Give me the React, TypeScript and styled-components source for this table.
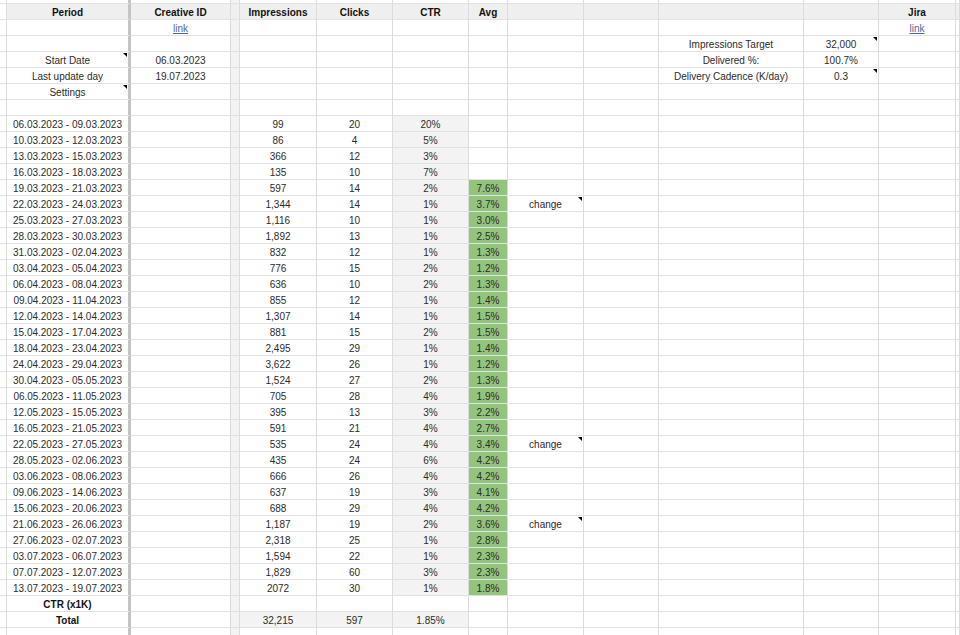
import * as React from 'react';
import styled, { createGlobalStyle, css } from 'styled-components';

const GlobalStyle = createGlobalStyle`
  html, body {
    margin: 0;
    padding: 0;
    background: #ffffff;
  }
`;

// column widths, each includes its right grid line
const COLS = [7, 124, 100, 9, 77, 76, 76, 39, 76, 75, 145, 75, 77];

type Fill = 'none' | 'header' | 'gray' | 'green';

const fills: Record<Fill, string> = {
  none: '#ffffff',
  header: '#efefef',
  gray: '#f3f3f3',
  green: '#93c47d',
};

const Sheet = styled.div`
  display: grid;
  grid-template-columns: ${COLS.map((w) => `${w}px`).join(' ')} 1fr;
  grid-template-rows: 4px;
  grid-auto-rows: 16px;
  width: 960px;
  height: 635px;
  overflow: hidden;
  font-family: 'Liberation Sans', Arial, sans-serif;
  font-size: 10px;
  color: #2b2b2b;
`;

const Cell = styled.div<{ $fill: Fill; $bold?: boolean; $frozen?: boolean }>`
  position: relative;
  box-sizing: border-box;
  padding-top: 1px;
  border-right: 1px solid #dcdcdc;
  border-bottom: 1px solid #e2e2e2;
  background: ${({ $fill }) => fills[$fill]};
  text-align: center;
  line-height: 15px;
  white-space: nowrap;
  overflow: hidden;
  ${({ $bold }) =>
    $bold &&
    css`
      font-weight: bold;
      color: #111111;
    `}
  ${({ $frozen }) =>
    $frozen &&
    css`
      border-right: 3px solid #c4c4c4;
    `}
`;

const Note = styled.span`
  position: absolute;
  top: 1px;
  right: 1px;
  width: 0;
  height: 0;
  border-top: 4px solid #000000;
  border-left: 4px solid transparent;
`;

const LinkText = styled.span`
  color: #5068a6;
  text-decoration: underline;
`;

type CellSpec = {
  text?: string;
  bold?: boolean;
  fill?: Fill;
  note?: boolean;
  link?: boolean;
};

type RowSpec = Record<number, CellSpec>;

const dataRows: [string, string, string, string, string, boolean?][] = [
  ['06.03.2023 - 09.03.2023', '99', '20', '20%', ''],
  ['10.03.2023 - 12.03.2023', '86', '4', '5%', ''],
  ['13.03.2023 - 15.03.2023', '366', '12', '3%', ''],
  ['16.03.2023 - 18.03.2023', '135', '10', '7%', ''],
  ['19.03.2023 - 21.03.2023', '597', '14', '2%', '7.6%'],
  ['22.03.2023 - 24.03.2023', '1,344', '14', '1%', '3.7%', true],
  ['25.03.2023 - 27.03.2023', '1,116', '10', '1%', '3.0%'],
  ['28.03.2023 - 30.03.2023', '1,892', '13', '1%', '2.5%'],
  ['31.03.2023 - 02.04.2023', '832', '12', '1%', '1.3%'],
  ['03.04.2023 - 05.04.2023', '776', '15', '2%', '1.2%'],
  ['06.04.2023 - 08.04.2023', '636', '10', '2%', '1.3%'],
  ['09.04.2023 - 11.04.2023', '855', '12', '1%', '1.4%'],
  ['12.04.2023 - 14.04.2023', '1,307', '14', '1%', '1.5%'],
  ['15.04.2023 - 17.04.2023', '881', '15', '2%', '1.5%'],
  ['18.04.2023 - 23.04.2023', '2,495', '29', '1%', '1.4%'],
  ['24.04.2023 - 29.04.2023', '3,622', '26', '1%', '1.2%'],
  ['30.04.2023 - 05.05.2023', '1,524', '27', '2%', '1.3%'],
  ['06.05.2023 - 11.05.2023', '705', '28', '4%', '1.9%'],
  ['12.05.2023 - 15.05.2023', '395', '13', '3%', '2.2%'],
  ['16.05.2023 - 21.05.2023', '591', '21', '4%', '2.7%'],
  ['22.05.2023 - 27.05.2023', '535', '24', '4%', '3.4%', true],
  ['28.05.2023 - 02.06.2023', '435', '24', '6%', '4.2%'],
  ['03.06.2023 - 08.06.2023', '666', '26', '4%', '4.2%'],
  ['09.06.2023 - 14.06.2023', '637', '19', '3%', '4.1%'],
  ['15.06.2023 - 20.06.2023', '688', '29', '4%', '4.2%'],
  ['21.06.2023 - 26.06.2023', '1,187', '19', '2%', '3.6%', true],
  ['27.06.2023 - 02.07.2023', '2,318', '25', '1%', '2.8%'],
  ['03.07.2023 - 06.07.2023', '1,594', '22', '1%', '2.3%'],
  ['07.07.2023 - 12.07.2023', '1,829', '60', '3%', '2.3%'],
  ['13.07.2023 - 19.07.2023', '2072', '30', '1%', '1.8%'],
];

// column indexes: 0 gutter, 1 A, 2 B, 3 C, 4 D, 5 E, 6 F, 7 G, 8 H, 9 I, 10 J, 11 K, 12 L, 13 M
const headerRow: RowSpec = {
  1: { text: 'Period', bold: true },
  2: { text: 'Creative ID', bold: true },
  4: { text: 'Impressions', bold: true },
  5: { text: 'Clicks', bold: true },
  6: { text: 'CTR', bold: true },
  7: { text: 'Avg', bold: true },
  12: { text: 'Jira', bold: true },
};

const rows: RowSpec[] = [
  {
    2: { link: true, text: 'link' },
    12: { link: true, text: 'link' },
  },
  {
    10: { text: 'Impressions Target' },
    11: { text: '32,000', note: true },
  },
  {
    1: { text: 'Start Date', note: true },
    2: { text: '06.03.2023' },
    10: { text: 'Delivered %:' },
    11: { text: '100.7%' },
  },
  {
    1: { text: 'Last update day' },
    2: { text: '19.07.2023' },
    10: { text: 'Delivery Cadence (K/day)' },
    11: { text: '0.3', note: true },
  },
  { 1: { text: 'Settings', note: true } },
  {},
  ...dataRows.map(([period, imp, clicks, ctr, avg, change]) => ({
    1: { text: period },
    4: { text: imp },
    5: { text: clicks },
    6: { text: ctr, fill: 'gray' as Fill },
    7: avg ? { text: avg, fill: 'green' as Fill } : {},
    8: change ? { text: 'change', note: true } : {},
  })),
  { 1: { text: 'CTR (x1K)', bold: true } },
  {
    1: { text: 'Total', bold: true },
    4: { text: '32,215', fill: 'gray' },
    5: { text: '597', fill: 'gray' },
    6: { text: '1.85%', fill: 'gray' },
  },
  {},
];

const columnCount = COLS.length + 1;

const renderRow = (spec: RowSpec, key: string, header = false) =>
  Array.from({ length: columnCount }, (_, col) => {
    const c = spec[col] || {};
    let fill: Fill = c.fill || 'none';
    if (header && col > 0) fill = 'header';
    if (col === 3) fill = header ? 'header' : 'gray';
    return (
      <Cell key={`${key}-${col}`} $fill={fill} $bold={c.bold} $frozen={col === 1}>
        {c.link ? <LinkText>{c.text}</LinkText> : c.text}
        {c.note && <Note />}
      </Cell>
    );
  });

const App = () => (
  <>
    <GlobalStyle />
    <Sheet>
      {renderRow({}, 'top')}
      {renderRow(headerRow, 'head', true)}
      {rows.map((r, i) => renderRow(r, `r${i}`))}
    </Sheet>
  </>
);

export default App;
